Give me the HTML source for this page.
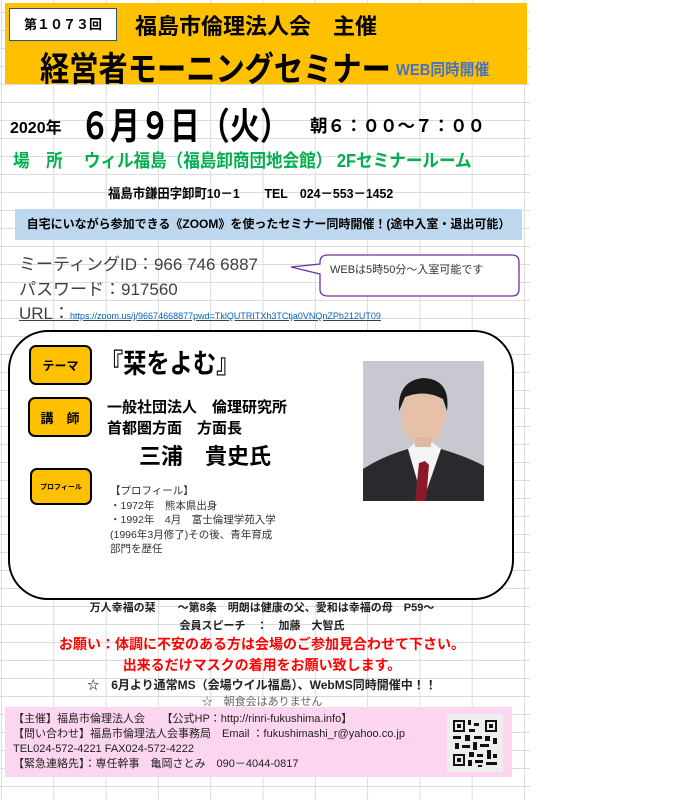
<!DOCTYPE html>
<html><head><meta charset="utf-8"><style>
*{margin:0;padding:0;box-sizing:border-box}
body{width:694px;height:800px;background:#fff;position:relative;overflow:hidden;font-family:"Liberation Sans","Noto Sans CJK JP",sans-serif;color:#000}
.grid{position:absolute;left:0;top:0;width:530px;height:800px;background-image:linear-gradient(to right,#dcdcdc 1px,transparent 1px),linear-gradient(to bottom,#dcdcdc 1px,transparent 1px);background-size:52.3px 100%,100% 18px;background-position:1px 0,0 12px}
.a{position:absolute;white-space:nowrap;transform-origin:0 0}
.box{position:absolute;background:#FFC000;border:2px solid #000;border-radius:7px;display:flex;align-items:center;justify-content:center;font-weight:bold}
</style></head><body>
<div class="grid"></div>
<div class="a" style="left:5px;top:3px;width:522px;height:81px;background:#FFC000"></div>
<div class="a" style="left:9px;top:8px;width:108px;height:33px;background:#fff;border:1px solid #2F4F7F;font-size:13px;font-weight:bold;line-height:31px;text-align:center">第１０７３回</div>
<div class="a" style="left:135px;top:9px;font-size:22px;font-weight:bold">福島市倫理法人会　主催</div>
<div class="a" style="left:40px;top:42px;font-size:34px;font-weight:bold;transform:scaleX(0.86)">経営者モーニングセミナー</div>
<div class="a" style="left:396px;top:56px;font-size:16px;font-weight:bold;color:#4472C4;transform:scaleX(0.92)">WEB同時開催</div>
<div class="a" style="left:10px;top:114px;font-size:16px;font-weight:bold">2020年</div>
<div class="a" style="left:80px;top:96px;font-size:37px;font-weight:bold;transform:scaleX(0.81)">６月９日（火）</div>
<div class="a" style="left:310px;top:113px;font-size:17.5px;font-weight:bold">朝６：００～７：００</div>
<div class="a" style="left:13px;top:147px;font-size:18px;font-weight:bold;color:#00B050;transform:scaleX(0.92)">場　所　 ウィル福島（福島卸商団地会館） 2Fセミナールーム</div>
<div class="a" style="left:108px;top:183px;font-size:13px;font-weight:bold;transform:scaleX(0.95)">福島市鎌田字卸町10－1　　TEL　024－553－1452</div>
<div class="a" style="left:15px;top:209px;width:507px;height:31px;background:#BDD7EE;font-size:12px;font-weight:bold;line-height:31px;text-align:center">自宅にいながら参加できる《ZOOM》を使ったセミナー同時開催！(途中入室・退出可能）</div>
<div class="a" style="left:19px;top:250px;font-size:17px;color:#404040">ミーティングID：966 746 6887</div>
<div class="a" style="left:19px;top:275px;font-size:17px;color:#404040">パスワード：917560</div>
<div class="a" style="left:19px;top:299px;font-size:17px;color:#404040;text-decoration:underline">URL：<span style="font-size:9px;color:#0563C1">https://zoom.us/j/96674668877pwd=TklQUTRITXh3TCtja0VNQnZPb212UT09</span></div>
<svg class="a" style="left:288px;top:252px" width="234" height="48"><path d="M32 10 Q32 3 40 3 L224 3 Q231 3 231 10 L231 37 Q231 44 224 44 L40 44 Q32 44 32 37 L32 22 L3 15 L32 12 Z" fill="#fff" stroke="#7030A0" stroke-width="1.3"/></svg>
<div class="a" style="left:330px;top:261px;font-size:11px;color:#333">WEBは5時50分～入室可能です</div>
<div class="a" style="left:8px;top:330px;width:506px;height:270px;border:2px solid #000;border-radius:40px;background:#fff"></div>
<div class="box" style="left:29px;top:345px;width:63px;height:40px;font-size:12px">テーマ</div>
<div class="a" style="left:100px;top:342px;font-size:27px;font-weight:bold;transform:scaleX(0.86)">『栞をよむ』</div>
<div class="box" style="left:28px;top:397px;width:64px;height:40px;font-size:13px">講　師</div>
<div class="a" style="left:107px;top:396px;font-size:15px;font-weight:bold">一般社団法人　倫理研究所</div>
<div class="a" style="left:107px;top:417px;font-size:15px;font-weight:bold">首都圏方面　方面長</div>
<div class="a" style="left:139px;top:439px;font-size:22px;font-weight:bold">三浦　貴史氏</div>
<div class="box" style="left:30px;top:468px;width:62px;height:37px;font-size:7px">プロフィール</div>
<div class="a" style="left:110px;top:484px;font-size:10.5px;line-height:14.5px;color:#333">【プロフィール】<br>・1972年　熊本県出身<br>・1992年　4月　富士倫理学苑入学<br>(1996年3月修了)その後、青年育成<br>部門を歴任</div>
<svg class="a" style="left:363px;top:361px" width="121" height="140" viewBox="0 0 121 140">
<rect width="121" height="140" fill="#c9c8d0"/>
<path d="M0 140 L0 108 Q20 95 45 88 L60 105 L78 88 Q105 96 121 105 L121 140 Z" fill="#2a2a2e"/>
<path d="M45 88 L60 140 L78 88 L70 82 L52 82 Z" fill="#f4f4f4"/>
<path d="M56 102 L62 100 L66 104 L63 140 L52 140 Z" fill="#8a1a2a"/>
<ellipse cx="60" cy="55" rx="22" ry="28" fill="#e6c0a8"/>
<path d="M36 50 Q34 20 60 17 Q88 18 84 50 L80 38 Q62 28 42 36 Z" fill="#1a1a1a"/>
<rect x="52" y="76" width="16" height="10" fill="#e0b8a0"/>
</svg>
<div class="a" style="left:0;width:524px;top:599px;text-align:center;font-size:11px;font-weight:bold;color:#222">万人幸福の栞　　～第8条　明朗は健康の父、愛和は幸福の母　P59～</div>
<div class="a" style="left:0;width:524px;top:617px;text-align:center;font-size:11px;font-weight:bold;color:#222">会員スピーチ　：　加藤　大智氏</div>
<div class="a" style="left:0;width:524px;top:634px;text-align:center;font-size:14px;font-weight:bold;color:#FF0000">お願い：体調に不安のある方は会場のご参加見合わせて下さい。</div>
<div class="a" style="left:0;width:524px;top:655px;text-align:center;font-size:14px;font-weight:bold;color:#FF0000">出来るだけマスクの着用をお願い致します。</div>
<div class="a" style="left:0;width:524px;top:676px;text-align:center;font-size:12px;font-weight:bold;color:#222">☆　6月より通常MS（会場ウイル福島）、WebMS同時開催中！！</div>
<div class="a" style="left:0;width:524px;top:693px;text-align:center;font-size:11px;color:#666">☆　朝食会はありません</div>
<div class="a" style="left:5px;top:707px;width:507px;height:70px;background:#FCD5F0"></div>
<div class="a" style="left:13px;top:712px;font-size:11px;line-height:15px;color:#222">【主催】福島市倫理法人会　　【公式HP：http://rinri-fukushima.info】<br>【問い合わせ】福島市倫理法人会事務局　Email ：fukushimashi_r@yahoo.co.jp<br>TEL024-572-4221  FAX024-572-4222<br>【緊急連絡先】：専任幹事　亀岡さとみ　090－4044-0817</div>
<svg class="a" style="left:447px;top:714px" width="56" height="58" viewBox="0 0 56 58">
<rect width="56" height="58" fill="#eee"/>
<g fill="#111"><rect x="6" y="6" width="12" height="12"/><rect x="38" y="6" width="12" height="12"/><rect x="6" y="40" width="12" height="12"/></g>
<g fill="#eee"><rect x="8" y="8" width="8" height="8"/><rect x="40" y="8" width="8" height="8"/><rect x="8" y="42" width="8" height="8"/></g>
<g fill="#111"><rect x="10" y="10" width="4" height="4"/><rect x="42" y="10" width="4" height="4"/><rect x="10" y="44" width="4" height="4"/>
<rect x="21" y="6" width="3" height="5"/><rect x="27" y="9" width="5" height="3"/><rect x="22" y="15" width="6" height="3"/><rect x="6" y="22" width="8" height="3"/><rect x="18" y="21" width="5" height="6"/><rect x="27" y="22" width="8" height="3"/><rect x="38" y="22" width="5" height="5"/><rect x="46" y="24" width="4" height="6"/><rect x="8" y="29" width="4" height="6"/><rect x="15" y="31" width="8" height="3"/><rect x="26" y="28" width="4" height="8"/><rect x="33" y="30" width="9" height="3"/><rect x="22" y="38" width="5" height="5"/><rect x="30" y="40" width="6" height="3"/><rect x="40" y="36" width="4" height="9"/><rect x="46" y="40" width="4" height="4"/><rect x="21" y="46" width="4" height="6"/><rect x="28" y="46" width="8" height="3"/><rect x="39" y="48" width="11" height="3"/><rect x="31" y="51" width="4" height="2"/></g>
</svg>
</body></html>
